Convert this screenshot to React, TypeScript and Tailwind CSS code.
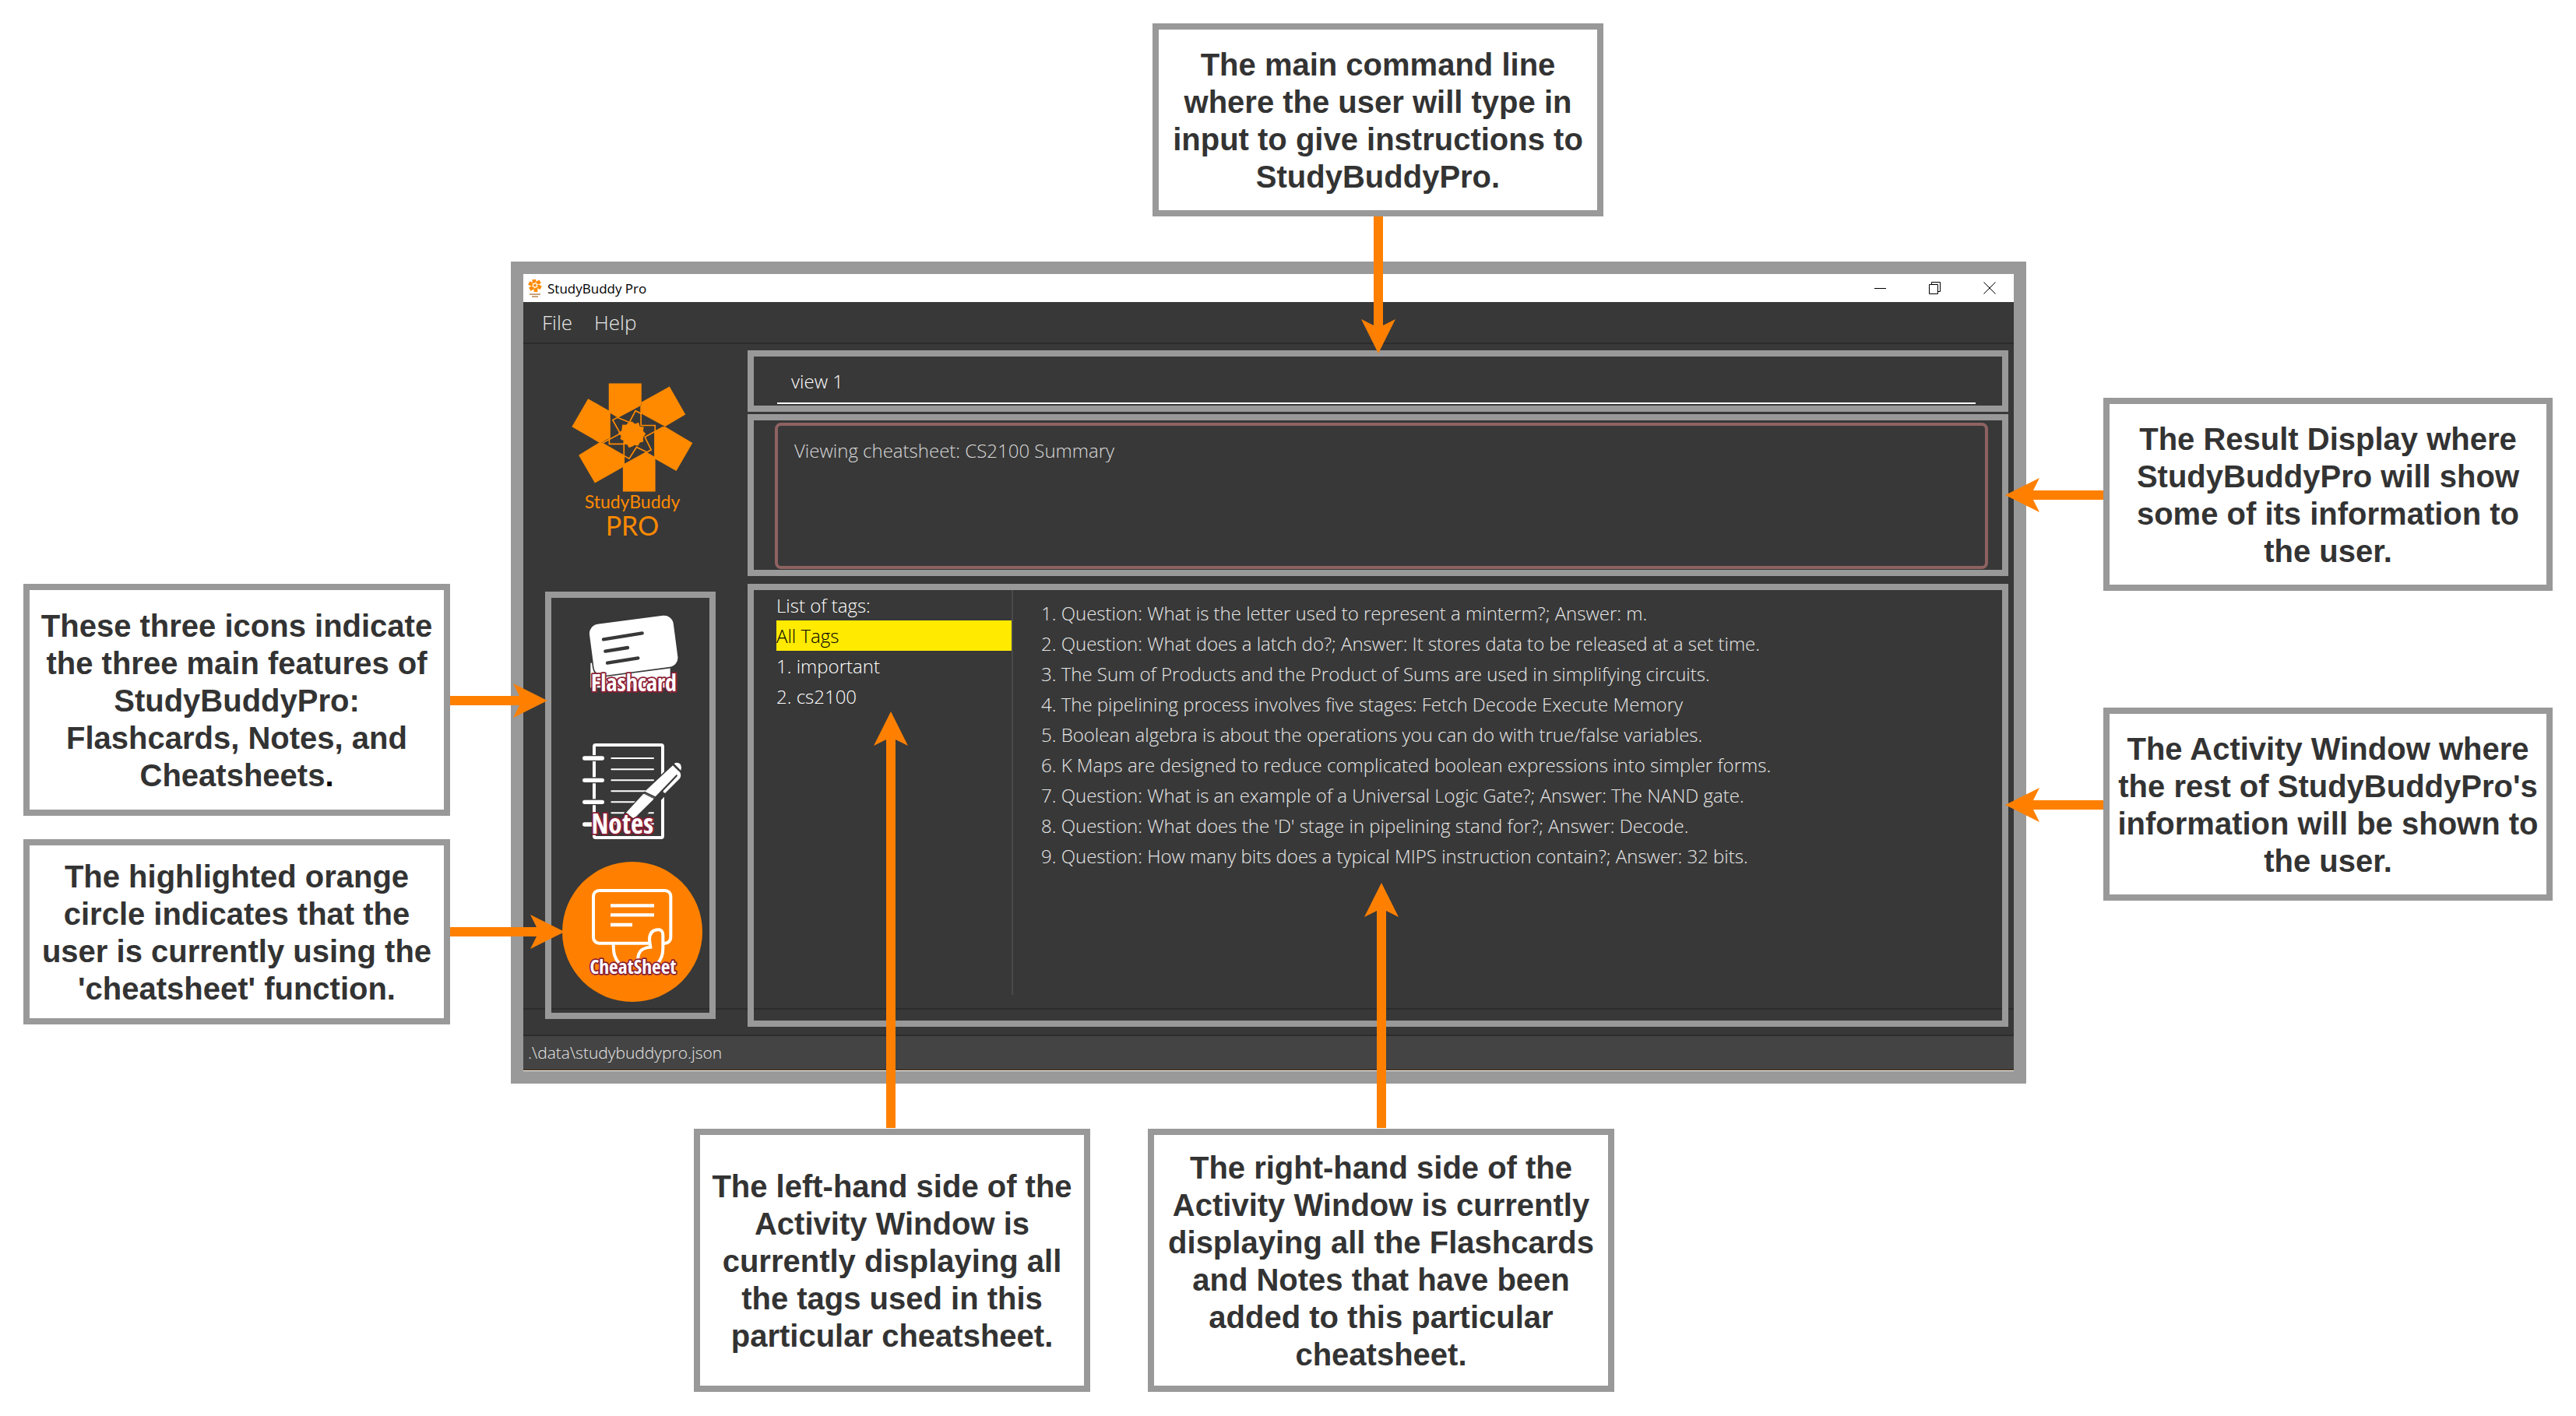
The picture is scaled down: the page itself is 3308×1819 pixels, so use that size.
import type { ReactNode } from "react";

const tags = ["All Tags", "1. important", "2. cs2100"];

const notes = [
  "1. Question: What is the letter used to represent a minterm?; Answer: m.",
  "2. Question: What does a latch do?; Answer: It stores data to be released at a set time.",
  "3. The Sum of Products and the Product of Sums are used in simplifying circuits.",
  "4. The pipelining process involves five stages: Fetch Decode Execute Memory",
  "5. Boolean algebra is about the operations you can do with true/false variables.",
  "6. K Maps are designed to reduce complicated boolean expressions into simpler forms.",
  "7. Question: What is an example of a Universal Logic Gate?; Answer: The NAND gate.",
  "8. Question: What does the 'D' stage in pipelining stand for?; Answer: Decode.",
  "9. Question: How many bits does a typical MIPS instruction contain?; Answer: 32 bits.",
];

type Direction = "up" | "down" | "left" | "right";

const arrowLayout: Record<Direction, string> = {
  up: "flex-col-reverse",
  down: "flex-col",
  left: "flex-row-reverse",
  right: "flex-row",
};

const headPoints: Record<Direction, string> = {
  up: "22,0 44,44 28,36 28,44 16,44 16,36 0,44",
  down: "22,44 44,0 28,8 28,0 16,0 16,8 0,0",
  left: "0,22 44,0 36,16 44,16 44,28 36,28 44,44",
  right: "44,22 0,0 8,16 0,16 0,28 8,28 0,44",
};

/** Callout arrow: a shaft that fills the given length and a notched head. */
function Arrow({ direction, className }: { direction: Direction; className: string }) {
  const vertical = direction === "up" || direction === "down";
  return (
    <div aria-hidden="true" className={`pointer-events-none absolute z-10 flex items-center ${arrowLayout[direction]} ${className}`}>
      <div className={vertical ? "w-3 flex-1 bg-[#ff8000]" : "h-3 flex-1 bg-[#ff8000]"} />
      <svg viewBox="0 0 44 44" className="size-11 shrink-0">
        <polygon points={headPoints[direction]} fill="#ff8000" />
      </svg>
    </div>
  );
}

function Callout({ className, children, arrow }: { className: string; children: ReactNode; arrow: ReactNode }) {
  return (
    <aside className={`relative flex items-center justify-center border-8 border-[#999] bg-white px-2 text-center text-[40px] leading-[48px] font-bold text-[#333] ${className}`}>
      <p className="pt-0.5">{children}</p>
      {arrow}
    </aside>
  );
}

function PetalMark({ className }: { className: string }) {
  return (
    <svg viewBox="14 14 464 416" className={className} fill="#ff8a00" aria-hidden="true">
      <polygon points="156,15 281,15 281,96 190,146 156,125" />
      <polygon points="281,87 388,27 449,134 371,180 281,131" />
      <polygon points="364,181 371,180 476,243 414,350 330,302 330,200" />
      <polygon points="299,277 334,297 334,429 210,429 210,326" />
      <polygon points="118,242 134,243 216,290 216,332 103,396 41,290" />
      <polygon points="77,74 162,122 162,222 124,244 15,181" />
      <g fill="none" stroke="#ff8a00" strokeWidth="5" strokeLinejoin="miter">
        <path d="M279 98V176H333V300" />
        <path d="M158 124V247H214V326" />
        <path d="M275 99L171 155L200 207L130 244" />
        <path d="M190 146L235 164L258 120L282 132" />
        <path d="M210 290L234 303L262 259L300 277" />
        <path d="M216 325L318 269L294 220L364 182" />
      </g>
      <polygon points="245,161 256,170 270,165 275,180 290,182 287,197 297,208 287,222 288,238 275,241 268,254 255,251 245,257 233,261 226,249 211,248 212,234 200,228 203,215 192,205 205,196 207,181 208,173 222,174 232,164" />
    </svg>
  );
}

const iconText = {
  fill: "#fff",
  stroke: "#8b1e35",
  strokeWidth: 11,
  strokeLinejoin: "round" as const,
  paintOrder: "stroke",
  textAnchor: "middle" as const,
};

function FlashcardIcon() {
  return (
    <svg viewBox="96 54 540 477" className="block h-[159px] w-[180px]">
      <rect x="205" y="305" width="307" height="95" fill="#fff" />
      <g transform="rotate(-7.5 371 238)">
        <rect x="208" y="138" width="326" height="200" rx="36" fill="#fff" stroke="#383838" strokeWidth="10" paintOrder="stroke" />
      </g>
      <g stroke="#383838" strokeWidth="13" strokeLinecap="round">
        <path d="M255 214L404 190" />
        <path d="M262 260L348 246" />
        <path d="M270 305L388 286" />
      </g>
      <text x="372" y="414" className="font-['Open_Sans_Condensed'] text-[90px] font-bold" {...iconText}>Flashcard</text>
    </svg>
  );
}

function NotesIcon() {
  return (
    <svg viewBox="96 531 540 540" className="block size-[180px]">
      <rect x="219" y="621" width="264" height="357" rx="6" fill="none" stroke="#fff" strokeWidth="12" />
      <g stroke="#383838" strokeWidth="24">
        <path d="M205 672H233M205 757H233M205 841H233M205 927H233" />
      </g>
      <g stroke="#fff" strokeWidth="16" strokeLinecap="round">
        <path d="M182 672H250M182 757H250M182 841H250M182 927H250" />
      </g>
      <g stroke="#fff" strokeWidth="6" strokeLinecap="round">
        <path d="M286 672H447M286 715H447M286 757H447M286 799H447M286 841H447M286 883H447M286 925H447" />
      </g>
      <path d="M520 697L554 735L552 752L380 925L326 944L338 884Z" fill="#383838" stroke="#383838" strokeWidth="8" />
      <path d="M527 693Q540 684 552 696Q557 706 553 719Z" fill="#fff" />
      <path d="M522 700L550 727Q556 740 549 750L493 806Q484 806 485 798L540 740L537 734L455 820L414 800Z" fill="#fff" />
      <path d="M408 810L448 830L372 905L342 882Z" fill="#fff" />
      <path d="M414 806L452 824L446 830L408 811Z" fill="#fff" />
      <path d="M411 807L450 826" stroke="#383838" strokeWidth="4" />
      <path d="M337 890L363 911L328 928Z" fill="#fff" />
      <text x="328" y="963" className="font-['Open_Sans_Condensed'] text-[105px] font-bold" {...iconText}>Notes</text>
    </svg>
  );
}

function CheatSheetIcon() {
  return (
    <svg viewBox="96 1071 540 540" className="block size-[180px]">
      <circle cx="366" cy="1341" r="270" fill="#ff8000" />
      <g fill="none" stroke="#fff" strokeWidth="12">
        <rect x="216" y="1182" width="298" height="203" rx="22" />
        <path d="M282 1240H450M282 1276H450M282 1314H366" strokeWidth="13" />
        <path d="M293 1388C293 1425 298 1445 318 1466" />
        <path d="M388 1462V1440C391 1412 408 1402 436 1400L432 1372C432 1344 446 1334 464 1333C478 1332 484 1340 484 1356V1405C484 1430 476 1450 462 1464" fill="#ff8000" />
      </g>
      <text x="369" y="1502" className="font-['Open_Sans_Condensed'] text-[76px] font-bold" {...iconText} strokeWidth={10}>CheatSheet</text>
    </svg>
  );
}

function TitleBar() {
  return (
    <header className="flex h-9 items-center bg-white pr-[23px] pl-1.5 text-black">
      <div className="flex w-[18px] flex-col items-center">
        <PetalMark className="h-4 w-[18px]" />
        <div className="mt-0.5 h-0.5 w-3.5 bg-[#c9a27a]" />
        <div className="mt-px h-0.5 w-2 bg-[#c9a27a]" />
      </div>
      <h1 className="ml-[7px] flex-1 pt-0.5 text-[17px] font-normal">StudyBuddy Pro</h1>
      <div className="flex gap-[54px]">
        <button type="button" aria-label="Minimize">
          <svg viewBox="0 0 16 16" className="size-4" stroke="#000" fill="none"><path d="M0 8.5H15" /></svg>
        </button>
        <button type="button" aria-label="Restore">
          <svg viewBox="0 0 16 16" className="size-4" stroke="#000" fill="none">
            <path d="M.5 3.5H11.500V15.500H.5ZM3.500 3.500V.5H14.500V12.500H11.500" />
          </svg>
        </button>
        <button type="button" aria-label="Close">
          <svg viewBox="0 0 16 16" className="size-4" stroke="#000" fill="none"><path d="M.5 .5L15.500 15.500M15.500 .5L.5 15.500" /></svg>
        </button>
      </div>
    </header>
  );
}

function AppWindow() {
  return (
    <section className="border-16 border-[#999] bg-[#383838] font-['Open_Sans',sans-serif] font-light">
      <TitleBar />
      <nav className="flex h-[54px] items-center gap-[28px] border-b-2 border-[#2c2c2c] pl-6 text-[26px] text-[#e8e8e8]">
        <button type="button">File</button>
        <button type="button">Help</button>
      </nav>

      <div className="relative flex">
        <div aria-hidden="true" className="absolute inset-x-0 bottom-8 h-0.5 bg-[#2c2c2c]" />

        <div className="relative w-72 shrink-0 pt-[50px] pl-7">
          <div className="ml-[34px] flex w-[156px] flex-col items-center font-['Lato',sans-serif] font-normal text-[#ff8a00]">
            <PetalMark className="h-[140px] w-[156px]" />
            <span className="text-[23px] leading-6">StudyBuddy</span>
            <span className="mt-px text-[34px] leading-9">PRO</span>
          </div>
          <div className="mt-[67px] w-[219px] border-8 border-[#999] pb-3.5 pl-3.5">
            <button type="button" className="block"><FlashcardIcon /></button>
            <button type="button" className="block"><NotesIcon /></button>
            <button type="button" className="block" aria-pressed="true"><CheatSheetIcon /></button>
          </div>
        </div>

        <div className="relative min-w-0 flex-1 pt-2 pr-[7px] pb-2.5 text-2xl">
          <div className="h-[79px] border-8 border-[#999] pr-[34px] pl-[30px]">
            <input
              aria-label="Command"
              defaultValue="view 1"
              className="block h-[61px] w-full border-b-2 border-white bg-transparent pt-1 pl-[18px] text-white outline-none"
            />
          </div>

          <div className="mt-[3px] h-[208px] border-8 border-[#999] pt-[3px] pr-[18px] pb-px pl-[27px]">
            <textarea
              readOnly
              aria-label="Result"
              defaultValue="Viewing cheatsheet: CS2100 Summary"
              className="block h-full w-full resize-none rounded-lg border-4 border-[#8f6262] bg-transparent px-[21px] py-3 leading-[39px] text-[#d8d8d8] outline-none"
            />
          </div>

          <div className="mt-2.5 flex h-[569px] border-8 border-[#999] leading-[39px]">
            <div className="h-[520px] w-[333px] shrink-0 border-r-2 border-[#4a4a4a] pl-[29px] text-white">
              <h2>List of tags:</h2>
              <ul>
                {tags.map((tag, i) => (
                  <li key={tag} className={i === 0 ? "bg-[#ffea00] text-black" : ""}>{tag}</li>
                ))}
              </ul>
            </div>
            <ul className="pt-2.5 pl-9 text-[#e8e8e8]">
              {notes.map((note) => (
                <li key={note}>{note}</li>
              ))}
            </ul>
          </div>
        </div>
      </div>

      <footer className="border-t-2 border-b border-t-[#2c2c2c] border-b-[#4a2800] bg-[#444] pl-1.5 text-[21px] leading-[43px] text-[#e8e8e8]">
        .\data\studybuddypro.json
      </footer>
      <div className="h-px bg-white" />
    </section>
  );
}

export default function App() {
  return (
    <main className="min-h-screen bg-white p-[30px] font-['Liberation_Sans',Arial,sans-serif]">
      <div className="flex pl-[1450px]">
        <Callout className="w-[579px] py-[19px]" arrow={<Arrow direction="down" className="top-[240px] left-[260px] h-[176px]" />}>
          The main command line where the user will type in input to give instructions to StudyBuddyPro.
        </Callout>
      </div>

      <div className="mt-[58px] grid grid-cols-[548px_1fr_577px]">
        <div className="flex flex-col gap-[30px] pt-[414px]">
          <Callout className="py-5" arrow={<Arrow direction="right" className="top-[120px] left-[540px] w-[125px]" />}>
            These three icons indicate the three main features of StudyBuddyPro: Flashcards, Notes, and Cheatsheets
            <span className="text-black">.</span>
          </Callout>
          <Callout className="py-3.5" arrow={<Arrow direction="right" className="top-[89px] left-[540px] w-[147px]" />}>
            The highlighted orange circle indicates that the user is currently using the 'cheatsheet' function.
          </Callout>
        </div>

        <div className="pr-[99px] pl-[78px]">
          <AppWindow />
        </div>

        <div className="flex flex-col gap-[150px] pt-[175px]">
          <Callout className="py-[19px]" arrow={<Arrow direction="left" className="top-[95px] right-[569px] w-[126px]" />}>
            The Result Display where StudyBuddyPro will show some of its information to the user.
          </Callout>
          <Callout className="py-[19px]" arrow={<Arrow direction="left" className="top-[95px] right-[569px] w-[126px]" />}>
            The Activity Window where the rest of StudyBuddyPro's information will be shown to the user.
          </Callout>
        </div>
      </div>

      <div className="mt-[58px] flex gap-[74px] pl-[861px]">
        <Callout className="w-[509px]" arrow={<Arrow direction="up" className="bottom-[331px] left-[223px] h-[535px]" />}>
          The left-hand side of the Activity Window is currently displaying all the tags used in this particular cheatsheet.
        </Callout>
        <Callout className="w-[599px] py-4" arrow={<Arrow direction="up" className="bottom-[331px] left-[270px] h-[315px]" />}>
          The right-hand side of the Activity Window is currently displaying all the Flashcards and Notes that have been added to this particular cheatsheet.
        </Callout>
      </div>
    </main>
  );
}
